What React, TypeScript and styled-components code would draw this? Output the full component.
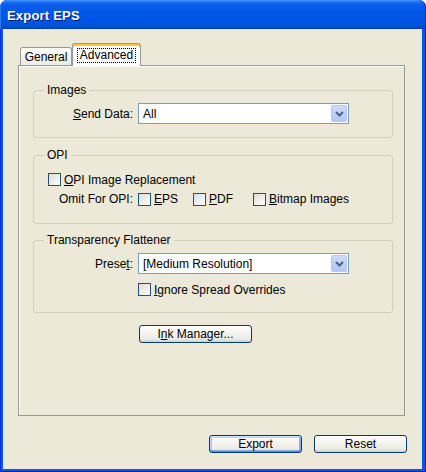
import React from 'react';
import styled, { createGlobalStyle } from 'styled-components';

const Global = createGlobalStyle`
  html, body { margin: 0; padding: 0; background: #ffffff; }
  body {
    width: 426px; height: 472px; overflow: hidden;
    font-family: "Liberation Sans", Arial, sans-serif;
    font-size: 12px; color: #000;
  }
  * { box-sizing: border-box; }
`;

const Window = styled.div`
  width: 426px;
  height: 472px;
  display: flex;
  flex-direction: column;
  border-radius: 7px 7px 0 0;
  overflow: hidden;
  background: #0a56e6;
`;

const TitleBar = styled.div`
  height: 29px;
  flex: none;
  display: flex;
  align-items: center;
  padding: 1px 0 0 7px;
  border-radius: 7px 7px 0 0;
  background: linear-gradient(
    to bottom,
    #4a9cff 0px,
    #1e6ef5 2px,
    #0a5ce9 5px,
    #0058e6 12px,
    #0054e3 20px,
    #0050dc 26px,
    #003dc0 29px
  );
  box-shadow: inset 1px 0 #2f7bf3, inset -1px 0 #0030b8;
`;

const Title = styled.span`
  color: #ffffff;
  font-family: "Liberation Sans", Arial, sans-serif;
  font-weight: bold;
  font-size: 13px;
  letter-spacing: 0.2px;
  text-shadow: 1px 1px #0a1883;
`;

const Frame = styled.div`
  flex: 1;
  display: flex;
  padding: 0 4px 3px 3px;
  background: #0a56e6;
  box-shadow: inset 1px 0 #0831d9, inset -1px 0 #001ea0, inset 0 -1px #001ea0;
`;

const Body = styled.div`
  flex: 1;
  display: flex;
  flex-direction: column;
  background: #ece9d8;
  padding: 14px 17px 0 15px;
`;

const TabRow = styled.div`
  display: flex;
  align-items: flex-end;
  height: 23px;
  padding-left: 2px;
  margin-bottom: -1px;
`;

const Tab = styled.div<{ $active?: boolean }>`
  position: relative;
  display: flex;
  align-items: center;
  justify-content: center;
  border-radius: 3px 3px 0 0;
  ${(p) =>
    p.$active
      ? `
    z-index: 2;
    height: 23px;
    width: 69px;
    padding: 2px 2px 1px;
    background: #fcfcfe;
    border-left: 1px solid #919b9c;
    border-right: 1px solid #919b9c;
    box-shadow: inset 0 1px #e68b2c, inset 0 3px #ffc73c;
  `
      : `
    z-index: 0;
    height: 19px;
    width: 52px;
    padding: 0 0 1px;
    border: 1px solid #919b9c;
    border-bottom: none;
    background: linear-gradient(to bottom, #ffffff, #f3f2ec 60%, #e9e8e1);
  `}
`;

const Focus = styled.span`
  display: flex;
  align-items: center;
  height: 15px;
  padding: 0 2px;
  border: 1px dotted #000;
`;

const Panel = styled.div`
  position: relative;
  z-index: 1;
  height: 351px;
  flex: none;
  display: flex;
  flex-direction: column;
  gap: 10px;
  border: 1px solid #919b9c;
  background: #ece9d8;
  box-shadow: inset 1px 1px #fcfcfe;
  padding: 17px 11px 0 14px;
`;

const Group = styled.fieldset<{ $mt?: number }>`
  margin: ${(p) => p.$mt ?? 0}px 0 0;
  padding: 0;
  min-width: 0;
  border: 1px solid #d0d0bf;
  border-radius: 3px;
`;

const Legend = styled.legend`
  margin-left: 10px;
  padding: 0 3px;
  height: 14px;
  line-height: 14px;
`;

const GroupBody = styled.div<{ $pt: number; $pb: number; $gap?: number }>`
  display: flex;
  flex-direction: column;
  gap: ${(p) => p.$gap ?? 0}px;
  padding-top: ${(p) => p.$pt}px;
  padding-bottom: ${(p) => p.$pb}px;
`;

const Row = styled.div<{ $indent?: number }>`
  display: flex;
  align-items: center;
  padding-left: ${(p) => p.$indent ?? 0}px;
`;

const FieldLabel = styled.span`
  width: 99px;
  margin-right: 5px;
  text-align: right;
  white-space: nowrap;
`;

const Select = styled.div`
  width: 211px;
  height: 21px;
  display: flex;
  align-items: center;
  border: 1px solid #7f9db9;
  background: #ffffff;
  padding: 1px 1px 1px 4px;
`;

const SelectText = styled.span`
  flex: 1;
  white-space: nowrap;
`;

const DropButton = styled.span`
  width: 16px;
  height: 17px;
  display: flex;
  align-items: center;
  justify-content: center;
  border: 1px solid #b6c7f4;
  border-radius: 2px;
  background: linear-gradient(to bottom, #cddcfc, #bccdf8 60%, #b2c5f5);
`;

const CheckItem = styled.label<{ $w?: number }>`
  display: flex;
  align-items: center;
  gap: 3px;
  height: 13px;
  white-space: nowrap;
  ${(p) => (p.$w ? `width: ${p.$w}px;` : '')}
`;

const Box = styled.span`
  width: 13px;
  height: 13px;
  flex: none;
  border: 1px solid #1c5180;
  background: linear-gradient(135deg, #dcdcd7, #f4f4f1 70%, #ffffff);
`;

const BtnRow = styled.div<{ $pt: number; $pl?: number }>`
  display: flex;
  padding-top: ${(p) => p.$pt}px;
  padding-left: ${(p) => p.$pl ?? 0}px;
`;

const BottomRow = styled.div`
  display: flex;
  justify-content: flex-end;
  gap: 12px;
  margin-top: 19px;
  margin-right: -2px;
`;

const Button = styled.button<{ $w: number; $default?: boolean }>`
  width: ${(p) => p.$w}px;
  height: 18px;
  padding: 0;
  font-family: "Liberation Sans", Arial, sans-serif;
  font-size: 12px;
  color: #000;
  border: 1px solid #003c74;
  border-radius: 3px;
  background: linear-gradient(to bottom, #ffffff, #f5f4f0 40%, #ecebe6 80%, #d6d0c5);
  line-height: 16px;
  ${(p) =>
    p.$default
      ? `box-shadow: inset 0 1px #cee7ff, inset 0 -1px #6982ee, inset 1px 0 #b8d6fb, inset -1px 0 #89ade4, inset 0 2px #bcd4f6, inset 0 -2px #89ade4, inset 2px 0 #a9c6f4, inset -2px 0 #89ade4;`
      : ''}
`;

const U = styled.span`
  text-decoration: underline;
  text-underline-offset: 1px;
`;

const Chevron = () => (
  <svg width="9" height="6" viewBox="0 0 9 6">
    <path d="M1 1 L4.5 4.5 L8 1" fill="none" stroke="#4d6185" strokeWidth="2" />
  </svg>
);

const Combo = ({ value }: { value: string }) => (
  <Select>
    <SelectText>{value}</SelectText>
    <DropButton>
      <Chevron />
    </DropButton>
  </Select>
);

export default function App() {
  return (
    <>
      <Global />
      <Window>
        <TitleBar>
          <Title>Export EPS</Title>
        </TitleBar>
        <Frame>
          <Body>
            <TabRow>
              <Tab>General</Tab>
              <Tab $active>
                <Focus>Advanced</Focus>
              </Tab>
            </TabRow>
            <Panel>
              <Group>
                <Legend>Images</Legend>
                <GroupBody $pt={6} $pb={13}>
                  <Row>
                    <FieldLabel>
                      <U>S</U>end Data:
                    </FieldLabel>
                    <Combo value="All" />
                  </Row>
                </GroupBody>
              </Group>
              <Group>
                <Legend>OPI</Legend>
                <GroupBody $pt={11} $pb={17} $gap={6}>
                  <Row $indent={14}>
                    <CheckItem>
                      <Box />
                      <span>
                        <U>O</U>PI Image Replacement
                      </span>
                    </CheckItem>
                  </Row>
                  <Row>
                    <FieldLabel>Omit For OPI:</FieldLabel>
                    <CheckItem $w={55}>
                      <Box />
                      <span>
                        <U>E</U>PS
                      </span>
                    </CheckItem>
                    <CheckItem $w={60}>
                      <Box />
                      <span>
                        <U>P</U>DF
                      </span>
                    </CheckItem>
                    <CheckItem>
                      <Box />
                      <span>
                        <U>B</U>itmap Images
                      </span>
                    </CheckItem>
                  </Row>
                </GroupBody>
              </Group>
              <Group $mt={-1}>
                <Legend>Transparency Flattener</Legend>
                <GroupBody $pt={6} $pb={16} $gap={9}>
                  <Row>
                    <FieldLabel>
                      Prese<U>t</U>:
                    </FieldLabel>
                    <Combo value="[Medium Resolution]" />
                  </Row>
                  <Row $indent={104}>
                    <CheckItem>
                      <Box />
                      <span>
                        <U>I</U>gnore Spread Overrides
                      </span>
                    </CheckItem>
                  </Row>
                </GroupBody>
              </Group>
              <BtnRow $pt={2} $pl={106}>
                <Button $w={113}>
                  I<U>n</U>k Manager...
                </Button>
              </BtnRow>
            </Panel>
            <BottomRow>
              <Button $w={93} $default>
                Export
              </Button>
              <Button $w={93}>Reset</Button>
            </BottomRow>
          </Body>
        </Frame>
      </Window>
    </>
  );
}
